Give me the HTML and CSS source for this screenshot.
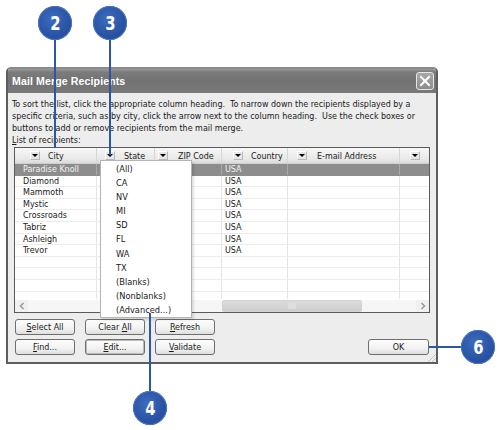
FILE: index.html
```html
<!DOCTYPE html>
<html>
<head>
<meta charset="utf-8">
<link rel="stylesheet" href="styles.css">
</head>
<body>
<div class="stage">
  <div class="dialog">
    <div class="titlebar">
      <span class="title">Mail Merge Recipients</span>
      <span class="close"><svg width="12" height="12" viewBox="0 0 12 12"><path d="M2 2 L10 10 M10 2 L2 10" stroke="#fff" stroke-width="2" stroke-linecap="square"/></svg></span>
    </div>
    <div class="body">
      <p class="intro">To sort the list, click the appropriate column heading.&nbsp; To narrow down the recipients displayed by a<br>specific criteria, such as by city, click the arrow next to the column heading.&nbsp; Use the check boxes or<br>buttons to add or remove recipients from the mail merge.</p>
      <div class="label"><u>L</u>ist of recipients:</div>
      <div class="grid">
        <div class="head">
          <div class="hc c-city"><span class="arr"></span><span>City</span></div>
          <div class="hc c-state"><span class="arr"></span><span>State</span></div>
          <div class="hc c-zip"><span class="arr"></span><span>ZIP Code</span></div>
          <div class="hc c-country"><span class="arr"></span><span>Country</span></div>
          <div class="hc c-email"><span class="arr"></span><span>E-mail Address</span></div>
          <div class="hc c-last"><span class="arr"></span></div>
        </div>
        <div class="rows">
          <div class="row sel"><div class="d d-city">Paradise Knoll</div><div class="d"></div><div class="d"></div><div class="d d-country">USA</div><div class="d"></div><div class="d"></div></div>
          <div class="row"><div class="d d-city">Diamond</div><div class="d"></div><div class="d"></div><div class="d d-country">USA</div><div class="d"></div><div class="d"></div></div>
          <div class="row"><div class="d d-city">Mammoth</div><div class="d"></div><div class="d"></div><div class="d d-country">USA</div><div class="d"></div><div class="d"></div></div>
          <div class="row"><div class="d d-city">Mystic</div><div class="d"></div><div class="d"></div><div class="d d-country">USA</div><div class="d"></div><div class="d"></div></div>
          <div class="row"><div class="d d-city">Crossroads</div><div class="d"></div><div class="d"></div><div class="d d-country">USA</div><div class="d"></div><div class="d"></div></div>
          <div class="row"><div class="d d-city">Tabriz</div><div class="d"></div><div class="d"></div><div class="d d-country">USA</div><div class="d"></div><div class="d"></div></div>
          <div class="row"><div class="d d-city">Ashleigh</div><div class="d"></div><div class="d"></div><div class="d d-country">USA</div><div class="d"></div><div class="d"></div></div>
          <div class="row"><div class="d d-city">Trevor</div><div class="d"></div><div class="d"></div><div class="d d-country">USA</div><div class="d"></div><div class="d"></div></div>
          <div class="row"><div class="d"></div><div class="d"></div><div class="d"></div><div class="d"></div><div class="d"></div><div class="d"></div></div>
          <div class="row"><div class="d"></div><div class="d"></div><div class="d"></div><div class="d"></div><div class="d"></div><div class="d"></div></div>
          <div class="row"><div class="d"></div><div class="d"></div><div class="d"></div><div class="d"></div><div class="d"></div><div class="d"></div></div>
          <div class="row"><div class="d"></div><div class="d"></div><div class="d"></div><div class="d"></div><div class="d"></div><div class="d"></div></div>
        </div>
        <div class="hscroll">
          <span class="sbtn"><svg width="6" height="8" viewBox="0 0 6 8"><path d="M4.5 1 L1.5 4 L4.5 7" fill="none" stroke="#9a9a9a" stroke-width="1.5"/></svg></span>
          <span class="track">
            <span class="thumb"><svg width="8" height="6" viewBox="0 0 8 6"><path d="M1 0V6M3 0V6M5 0V6M7 0V6" stroke="#e8e8e8" stroke-width="1"/></svg></span>
          </span>
          <span class="sbtn"><svg width="6" height="8" viewBox="0 0 6 8"><path d="M1.5 1 L4.5 4 L1.5 7" fill="none" stroke="#9a9a9a" stroke-width="1.5"/></svg></span>
        </div>
      </div>
      <div class="actions">
        <div class="btngrid">
          <button class="btn"><u>S</u>elect All</button>
          <button class="btn">Clear <u>A</u>ll</button>
          <button class="btn"><u>R</u>efresh</button>
          <button class="btn"><u>F</u>ind...</button>
          <button class="btn focus"><u>E</u>dit...</button>
          <button class="btn"><u>V</u>alidate</button>
        </div>
        <button class="btn ok">OK</button>
      </div>
      <span class="grip"></span>
    </div>
  </div>

  <ul class="menu">
    <li>(All)</li>
    <li>CA</li>
    <li>NV</li>
    <li>MI</li>
    <li>SD</li>
    <li>FL</li>
    <li>WA</li>
    <li>TX</li>
    <li>(Blanks)</li>
    <li>(Nonblanks)</li>
    <li>(Advanced...)</li>
  </ul>

  <span class="line l2"></span>
  <span class="line l3"></span>
  <span class="line l4"></span>
  <span class="line l6"></span>
  <span class="callout k2"><span class="num">2</span></span>
  <span class="callout k3"><span class="num">3</span></span>
  <span class="callout k4"><span class="num">4</span></span>
  <span class="callout k6"><span class="num">6</span></span>
</div>
</body>
</html>
```

FILE: styles.css
```css
html, body {
  margin: 0;
  padding: 0;
  background: #ffffff;
}

.stage {
  position: relative;
  width: 500px;
  height: 430px;
  padding: 67px 0 0 6px;
  box-sizing: border-box;
  font-family: "DejaVu Sans Condensed", "DejaVu Sans", sans-serif;
  font-size: 8.9px;
  color: #1a1a1a;
  overflow: hidden;
}

.dialog {
  width: 432px;
  height: 297px;
  box-sizing: border-box;
  border: 2px solid #5e5e5e;
  border-top-color: #8a8a8a;
  border-radius: 5px 5px 0 0;
  background: #ededed;
  display: flex;
  flex-direction: column;
}

.titlebar {
  height: 24px;
  flex: none;
  display: flex;
  align-items: center;
  justify-content: space-between;
  padding: 0 2px 0 4px;
  background: linear-gradient(#9a9a9a 0, #7c7c7c 3px, #727272 50%, #7a7a7a 100%);
  border-radius: 3px 3px 0 0;
}

.title {
  font-family: "Liberation Sans", Arial, sans-serif;
  font-weight: bold;
  font-size: 10.6px;
  color: #ffffff;
  letter-spacing: 0.1px;
}

.close {
  width: 16px;
  height: 16px;
  border: 1px solid #e6e6e6;
  border-radius: 3px;
  background: linear-gradient(#a8a8a8, #8c8c8c);
  display: flex;
  align-items: center;
  justify-content: center;
}

.body {
  position: relative;
  flex: 1;
  padding: 0 6px 0 4px;
  display: flex;
  flex-direction: column;
}

.intro {
  margin: 5px 0 0 0;
  line-height: 12px;
  white-space: nowrap;
}

.label {
  line-height: 12px;
}

.grid {
  margin: 1px 0 0 2px;
  width: 416px;
  box-sizing: border-box;
  border: 1px solid #5a5a5a;
  background: #ffffff;
}

.head, .row {
  display: grid;
  grid-template-columns: 82px 58px 67px 66px 112px 29px;
}

.head {
  height: 15px;
  background: linear-gradient(#f7f7f7, #e9e9e9 70%, #dcdcdc);
  border-bottom: 1px solid #cfcfcf;
}

.hc {
  display: flex;
  align-items: center;
  gap: 8px;
  border-right: 1px solid #d6d6d6;
  white-space: nowrap;
  overflow: hidden;
  color: #222;
}

.hc:last-child { border-right: none; }

.c-city { padding-left: 15px; }
.c-state { padding-left: 8px; gap: 9px; }
.c-zip { padding-left: 3px; gap: 10px; }
.c-country { padding-left: 11px; }
.c-email { padding-left: 9px; gap: 10px; }
.c-last { padding-left: 10px; }

.arr {
  flex: none;
  width: 10px;
  height: 9px;
  box-sizing: border-box;
  border: 1px solid;
  border-color: #ffffff #b8b8b8 #b8b8b8 #ffffff;
  background: #e6e6e6;
  position: relative;
}

.arr::after {
  content: "";
  position: absolute;
  left: 1px;
  top: 2px;
  border-left: 3px solid transparent;
  border-right: 3px solid transparent;
  border-top: 3px solid #000;
}

.rows {
  height: 135px;
  overflow: hidden;
}

.row {
  height: 11.6px;
  box-sizing: border-box;
  border-bottom: 1px solid #ececec;
  line-height: 11px;
}

.d {
  border-right: 1px solid #e4e4e4;
  white-space: nowrap;
  overflow: hidden;
}

.d:last-child { border-right: none; }

.d-city { padding-left: 8px; }
.d-country { padding-left: 3px; }

.row.sel {
  background: #8d8d8d;
  color: #f2f2f2;
  border-bottom-color: #8d8d8d;
}

.row.sel .d { border-right-color: #a8a8a8; }

.hscroll {
  height: 12px;
  display: flex;
  background: #f3f3f3;
  border-top: 1px solid #ffffff;
}

.sbtn {
  width: 13px;
  flex: none;
  display: flex;
  align-items: center;
  justify-content: center;
  background: #f0f0f0;
}

.track {
  flex: 1;
  position: relative;
  background: #f6f6f6;
}

.thumb {
  position: absolute;
  left: 194px;
  top: 0;
  width: 140px;
  height: 12px;
  box-sizing: border-box;
  border: 1px solid #d2d2d2;
  border-radius: 2px;
  background: linear-gradient(#dcdcdc, #cdcdcd);
  display: flex;
  align-items: center;
  justify-content: center;
}

.actions {
  margin: 6px 0 0 3px;
  display: flex;
  align-items: flex-end;
}

.btngrid {
  display: grid;
  grid-template-columns: 60px 60px 60px;
  column-gap: 10px;
  row-gap: 4px;
}

.btn {
  height: 16px;
  width: 60px;
  padding: 0;
  margin: 0;
  box-sizing: border-box;
  font-family: "DejaVu Sans Condensed", "DejaVu Sans", sans-serif;
  font-size: 8.9px;
  color: #1a1a1a;
  border: 1px solid #6e6e6e;
  border-radius: 3px;
  background: linear-gradient(#fdfdfd, #f2f2f2 60%, #dedede);
  line-height: 14px;
}

.btn.focus {
  box-shadow: inset 0 0 0 1px #bcbcbc;
}

.btn.ok {
  width: 61px;
  margin-left: auto;
  margin-right: 1px;
}

.grip {
  position: absolute;
  right: 0;
  bottom: 0;
  width: 10px;
  height: 10px;
  background: linear-gradient(135deg, transparent 55%, #c4c4c4 55%, #c4c4c4 62%, transparent 62%, transparent 75%, #c4c4c4 75%, #c4c4c4 82%, transparent 82%);
}

.menu {
  position: absolute;
  left: 100px;
  top: 160px;
  width: 92px;
  height: 158px;
  box-sizing: border-box;
  margin: 0;
  padding: 1px 0 0 0;
  list-style: none;
  background: #ffffff;
  border: 1px solid #b4b4b4;
  box-shadow: 2px 2px 2px rgba(0,0,0,0.12);
  font-size: 9.2px;
}

.menu li {
  height: 14.1px;
  line-height: 14px;
  padding-left: 15px;
  white-space: nowrap;
}

.line {
  position: absolute;
  background: #2c56a6;
}

.l2 { left: 54px; top: 36px; width: 2px; height: 112px; }
.l3 { left: 109px; top: 36px; width: 2px; height: 119px; }
.l4 { left: 149px; top: 313px; width: 2px; height: 80px; }
.l6 { left: 429px; top: 346px; width: 36px; height: 2px; }

.callout {
  position: absolute;
  width: 34px;
  height: 34px;
  border-radius: 50%;
  box-sizing: border-box;
  background: radial-gradient(circle at 42% 38%, #3f6cbe 0, #2a54a6 55%, #1f4390 100%);
  box-shadow: inset 0 0 0 1px #4a76c4;
  color: #ffffff;
  font-family: "DejaVu Sans Condensed", "DejaVu Sans", sans-serif;
  font-weight: bold;
  font-size: 20px;
  display: flex;
  align-items: center;
  justify-content: center;
}

.num {
  display: block;
  transform: scaleX(0.82);
  line-height: 20px;
}

.k2 { left: 38px; top: 6px; }
.k3 { left: 93px; top: 6px; }
.k4 { left: 133px; top: 391px; }
.k6 { left: 461px; top: 330px; }
```
